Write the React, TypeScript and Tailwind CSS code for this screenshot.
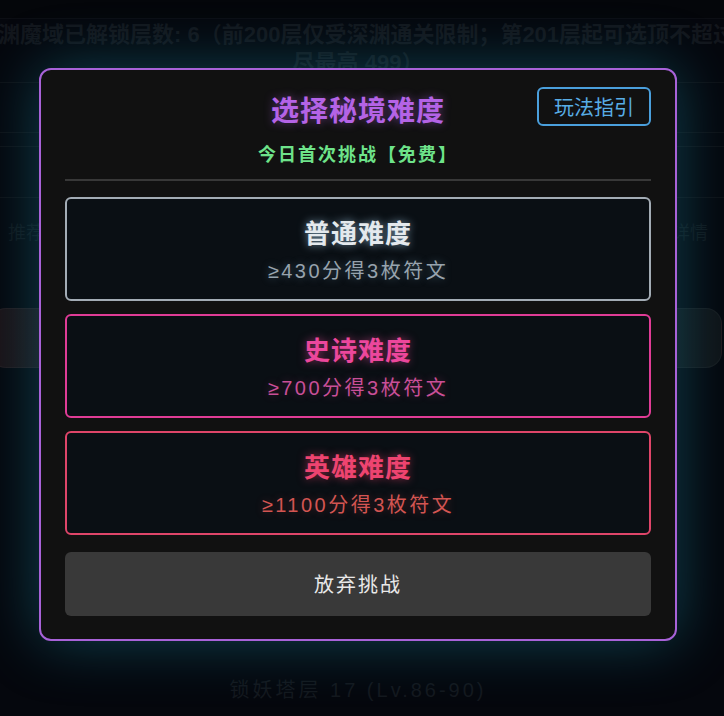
import React from 'react';

interface Difficulty {
  name: string;
  requirement: string;
  cardClass: string;
  titleClass: string;
  subClass: string;
}

const difficulties: Difficulty[] = [
  {
    name: '普通难度',
    requirement: '≥430分得3枚符文',
    cardClass: 'border-[#a3acb5]',
    titleClass: 'text-[#e4e9ed] [text-shadow:0_0_9px_rgba(180,225,255,0.6)]',
    subClass: 'text-[#97a3ad] [text-shadow:0_0_8px_rgba(150,200,230,0.35)]',
  },
  {
    name: '史诗难度',
    requirement: '≥700分得3枚符文',
    cardClass: 'border-[#e03c96]',
    titleClass: 'text-[#ec479c] [text-shadow:0_0_9px_rgba(236,72,153,0.55)]',
    subClass: 'text-[#c94f98] [text-shadow:0_0_8px_rgba(236,72,153,0.3)]',
  },
  {
    name: '英雄难度',
    requirement: '≥1100分得3枚符文',
    cardClass: 'border-[#df4569]',
    titleClass: 'text-[#ee4470] [text-shadow:0_0_9px_rgba(244,63,107,0.55)]',
    subClass: 'text-[#d35552] [text-shadow:0_0_8px_rgba(230,80,80,0.3)]',
  },
];

const DifficultyCard: React.FC<{ item: Difficulty }> = ({ item }) => (
  <button
    className={`flex h-[104px] w-full flex-col items-center justify-center rounded-md border-2 bg-[#0a0f14] pt-1 ${item.cardClass}`}
  >
    <span className={`text-[26px] font-bold leading-8 tracking-[1px] ${item.titleClass}`}>{item.name}</span>
    <span className={`mt-[7px] text-[20px] leading-7 tracking-[2.5px] ${item.subClass}`}>{item.requirement}</span>
  </button>
);

const App: React.FC = () => {
  return (
    <div className="relative h-[716px] w-full overflow-hidden bg-[#05070d] font-['Liberation_Sans','Noto_Sans_CJK_SC',sans-serif]">
      {/* dimmed page behind the dialog */}
      <div className="-mx-6 flex flex-col pr-2">
        <div className="h-[18px] bg-[#04060a]" />
        <div className="whitespace-nowrap border-t border-white/[0.03] pt-0.5 text-center text-[22px] font-bold leading-7 text-[#13161c]">
          深渊魔域已解锁层数: 6（前200层仅受深渊通关限制；第201层起可选顶不超过无
          <br />
          尽最高 499）
        </div>
        <div className="mt-[5px] h-[51px] border-y border-white/[0.035]" />
        <div className="mt-[13px] h-[52px] border-y border-white/[0.035]" />
        <div className="flex h-[70px] items-center justify-between px-8 text-[18px] text-[#10151a]">
          <span>推荐</span>
          <span>详情</span>
        </div>
        <div className="ml-[14px] mr-[18px] mt-10 h-[60px] rounded-2xl border border-white/[0.035] bg-gradient-to-r from-[#1a1115] via-[#131216] to-[#0f1216]" />
        <div className="mt-[308px] text-center text-[20px] leading-7 tracking-[3px] text-[#14181e]">
          锁妖塔层 17 (Lv.86-90)
        </div>
      </div>

      {/* overlay */}
      <div className="absolute inset-0 flex justify-center pr-2 pt-[68px]">
        <div className="relative h-fit w-[638px] rounded-xl border-2 border-[#a862d8] bg-[#111111] px-6 pb-[23px] pt-6 shadow-[0_0_60px_rgba(30,160,190,0.38)]">
          <button className="absolute right-6 top-[17px] flex h-[39px] w-[114px] items-center justify-center rounded-md border-2 border-[#4a9fdc] pt-0.5 text-[20px] leading-7 text-[#58ade6]">
            玩法指引
          </button>
          <h2 className="text-center text-[28px] font-bold leading-9 tracking-[1px] text-[#b463e6] [text-shadow:0_0_10px_rgba(180,100,230,0.45)]">
            选择秘境难度
          </h2>
          <p className="mt-3 text-center text-[18px] font-bold leading-[26px] tracking-[2px] text-[#6ee38a]">
            今日首次挑战【免费】
          </p>
          <div className="mt-[11px] h-0.5 bg-[#383838]" />
          <div className="mt-4 flex flex-col gap-[13px]">
            {difficulties.map((d) => (
              <DifficultyCard key={d.name} item={d} />
            ))}
          </div>
          <button className="mt-[17px] flex h-16 w-full items-center justify-center rounded-md bg-[#393939] pt-0.5 text-[20px] leading-7 tracking-[2px] text-[#e8e8e8]">
            放弃挑战
          </button>
        </div>
      </div>
    </div>
  );
};

export default App;
